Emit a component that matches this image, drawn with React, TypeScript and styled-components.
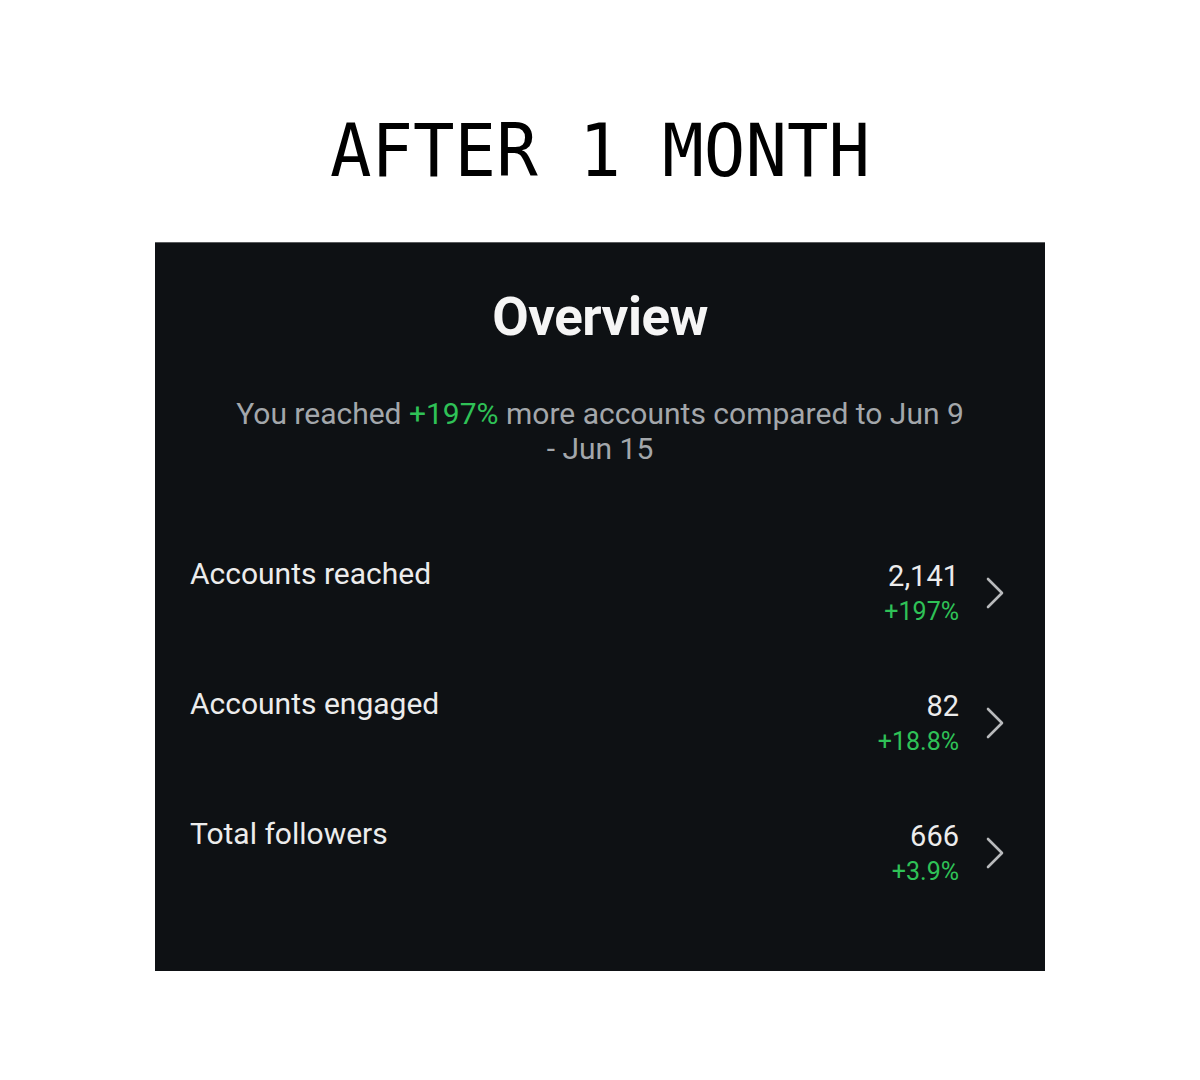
import styled, { createGlobalStyle } from "styled-components";

const GlobalStyle = createGlobalStyle`
    body {
        margin: 0;
        background: #ffffff;
    }
`;

const Page = styled.div`
    width: 1200px;
    height: 1080px;
    display: flex;
    flex-direction: column;
    align-items: center;
    background: #ffffff;
`;

const Heading = styled.h1`
    margin: 114px 0 0;
    height: 72px;
    font-family: "DejaVu Sans Mono", "Liberation Mono", monospace;
    font-weight: 400;
    font-size: 69px;
    line-height: 72px;
    color: #000000;
    transform: scaleY(1.07);
    letter-spacing: 0;
`;

const Panel = styled.div`
    margin-top: 56px;
    width: 890px;
    height: 729px;
    box-sizing: border-box;
    background: #0e1114;
    border-top: 1px solid #5a5c5e;
    display: flex;
    flex-direction: column;
    align-items: center;
    font-family: Roboto, "Noto Sans", sans-serif;
`;

const Title = styled.div`
    margin-top: 42px;
    font-size: 54px;
    line-height: 63px;
    font-weight: 700;
    color: #f5f5f5;
    letter-spacing: -0.5px;
    transform: scaleX(0.98);
`;

const Summary = styled.p`
    margin: 48px 0 0;
    width: 740px;
    text-align: center;
    font-size: 30px;
    line-height: 35px;
    color: #a3a7ab;
`;

const Green = styled.span`
    color: #2fc257;
`;

const List = styled.div`
    margin-top: 91px;
    width: 100%;
    box-sizing: border-box;
    padding: 0 40px 0 35px;
    display: flex;
    flex-direction: column;
    gap: 62px;
`;

const Row = styled.div`
    display: flex;
    align-items: flex-start;
    height: 68px;
`;

const Label = styled.div`
    flex: 1;
    font-size: 30px;
    line-height: 34px;
    color: #ececec;
`;

const Stats = styled.div`
    margin-top: 2px;
    display: flex;
    flex-direction: column;
    align-items: flex-end;
`;

const Value = styled.div`
    font-size: 29px;
    line-height: 34px;
    color: #ececec;
`;

const Change = styled.div`
    margin-top: 3px;
    font-size: 25px;
    line-height: 32px;
    color: #2fc257;
`;

const Chevron = styled.svg`
    margin: 20px 0 0 26px;
    flex-shrink: 0;
`;

const rows = [
    { label: "Accounts reached", value: "2,141", change: "+197%" },
    { label: "Accounts engaged", value: "82", change: "+18.8%" },
    { label: "Total followers", value: "666", change: "+3.9%" },
];

export default function App() {
    return <Page>
        <GlobalStyle />
        <Heading>AFTER 1 MONTH</Heading>
        <Panel>
            <Title>Overview</Title>
            <Summary>
                You reached <Green>+197%</Green> more accounts compared to Jun 9 - Jun 15
            </Summary>
            <List>
                {rows.map(r => (
                    <Row key={r.label}>
                        <Label>{r.label}</Label>
                        <Stats>
                            <Value>{r.value}</Value>
                            <Change>{r.change}</Change>
                        </Stats>
                        <Chevron width="20" height="32" viewBox="0 0 20 32">
                            <path d="M3 2 L17 16 L3 30" fill="none" stroke="#b8babc" strokeWidth="2.6" strokeLinecap="round" strokeLinejoin="round" />
                        </Chevron>
                    </Row>
                ))}
            </List>
        </Panel>
    </Page>;
}
